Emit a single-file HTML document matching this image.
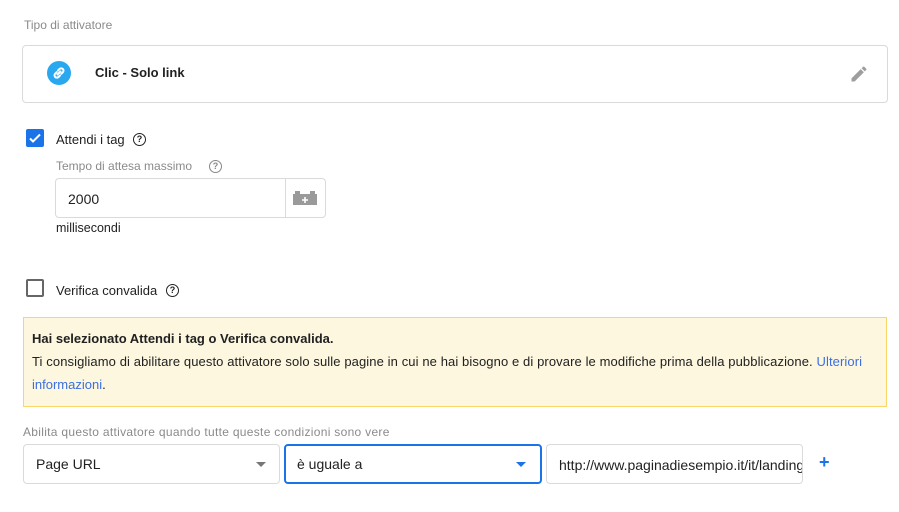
<!DOCTYPE html>
<html><head><meta charset="utf-8"><style>
*{box-sizing:border-box;margin:0;padding:0}
body{width:899px;height:512px;background:#fff;font-family:"Liberation Sans",sans-serif;color:#212121;position:relative;overflow:hidden}
.a{position:absolute;white-space:nowrap}
.q{display:inline-block;width:13px;height:13px;border:1.6px solid #222;border-radius:50%;font-size:9px;font-weight:bold;text-align:center;line-height:10px}
</style></head><body>
<div class="a" style="left:24px;top:18px;font-size:12px;color:#8a8a8a">Tipo di attivatore</div>
<div class="a" style="left:22px;top:45px;width:866px;height:58px;border:1px solid #dadada;border-radius:4px"></div>
<div class="a" style="left:47px;top:61px;width:24px;height:24px;border-radius:50%;background:#29a8f0">
<svg width="24" height="24" viewBox="0 0 24 24"><g fill="none" stroke="#fff" stroke-width="2" stroke-linecap="round"><path d="M11 9.5l1.5-1.5a2.3 2.3 0 0 1 3.3 3.3l-1.5 1.5"/><path d="M13 14.5l-1.5 1.5a2.3 2.3 0 0 1-3.3-3.3l1.5-1.5"/><path d="M10.5 13.5l3-3"/></g></svg></div>
<div class="a" style="left:95px;top:65px;font-size:13px;font-weight:bold">Clic - Solo link</div>
<svg class="a" style="left:849px;top:64px" width="20" height="20" viewBox="0 0 24 24"><path fill="#9e9e9e" d="M3 17.25V21h3.75L17.81 9.94l-3.75-3.75L3 17.25zM20.71 7.04a1 1 0 0 0 0-1.41l-2.34-2.34a1 1 0 0 0-1.41 0l-1.83 1.83 3.75 3.75 1.83-1.83z"/></svg>
<div class="a" style="left:26px;top:129px;width:18px;height:18px;background:#1a73e8;border-radius:2px">
<svg width="18" height="18" viewBox="0 0 18 18"><path d="M4 9.5l3 3 7-7" fill="none" stroke="#fff" stroke-width="2"/></svg></div>
<div class="a" style="left:56px;top:132px;font-size:13px">Attendi i tag</div>
<span class="a q" style="left:133px;top:133px">?</span>
<div class="a" style="left:56px;top:159px;font-size:12px;color:#8a8a8a">Tempo di attesa massimo</div>
<span class="a q" style="left:209px;top:160px;border-color:#888;color:#888">?</span>
<div class="a" style="left:55px;top:178px;width:271px;height:40px;border:1px solid #dadada;border-radius:4px"></div>
<div class="a" style="left:285px;top:179px;width:1px;height:38px;background:#dadada"></div>
<div class="a" style="left:68px;top:191px;font-size:14px">2000</div>
<svg class="a" style="left:293px;top:191px" width="24" height="14" viewBox="0 0 24 14"><rect x="0" y="3" width="24" height="11" fill="#9a9a9a"/><rect x="2" y="0" width="5" height="4" fill="#9a9a9a"/><rect x="17" y="0" width="5" height="4" fill="#9a9a9a"/><path d="M12 6v6M9 9h6" stroke="#fff" stroke-width="1.6"/></svg>
<div class="a" style="left:56px;top:221px;font-size:12.5px">millisecondi</div>
<div class="a" style="left:26px;top:279px;width:18px;height:18px;border:2px solid #666;border-radius:2px"></div>
<div class="a" style="left:56px;top:283px;font-size:13px">Verifica convalida</div>
<span class="a q" style="left:166px;top:284px">?</span>
<div class="a" style="left:23px;top:317px;width:864px;height:90px;background:#fdf7e0;border:1px solid #f8d66c"></div>
<div class="a" style="left:32px;top:331px;font-size:13px;font-weight:bold">Hai selezionato Attendi i tag o Verifica convalida.</div>
<div class="a" style="left:32px;top:354px;font-size:13px;letter-spacing:0.1px">Ti consigliamo di abilitare questo attivatore solo sulle pagine in cui ne hai bisogno e di provare le modifiche prima della pubblicazione. <span style="color:#3b6fe0">Ulteriori</span></div>
<div class="a" style="left:32px;top:377px;font-size:13px"><span style="color:#3b6fe0">informazioni</span>.</div>
<div class="a" style="left:23px;top:425px;font-size:12px;color:#8a8a8a;letter-spacing:0.3px">Abilita questo attivatore quando tutte queste condizioni sono vere</div>
<div class="a" style="left:23px;top:444px;width:257px;height:40px;border:1px solid #dadada;border-radius:4px"></div>
<div class="a" style="left:36px;top:456px;font-size:14px">Page URL</div>
<div class="a" style="left:256px;top:462px;border:5px solid transparent;border-top-color:#777;border-bottom:0"></div>
<div class="a" style="left:284px;top:444px;width:258px;height:40px;border:2px solid #1a73e8;border-radius:4px"></div>
<div class="a" style="left:297px;top:456px;font-size:14px">è uguale a</div>
<div class="a" style="left:516px;top:462px;border:5px solid transparent;border-top-color:#1a73e8;border-bottom:0"></div>
<div class="a" style="left:546px;top:444px;width:257px;height:40px;border:1px solid #dadada;border-radius:4px;overflow:hidden"><div style="position:absolute;left:12px;top:12px;font-size:14px">http://www.paginadiesempio.it/it/landing</div></div>
<div class="a" style="left:819px;top:452px;font-size:18px;color:#1a73e8;font-weight:bold">+</div>
</body></html>
